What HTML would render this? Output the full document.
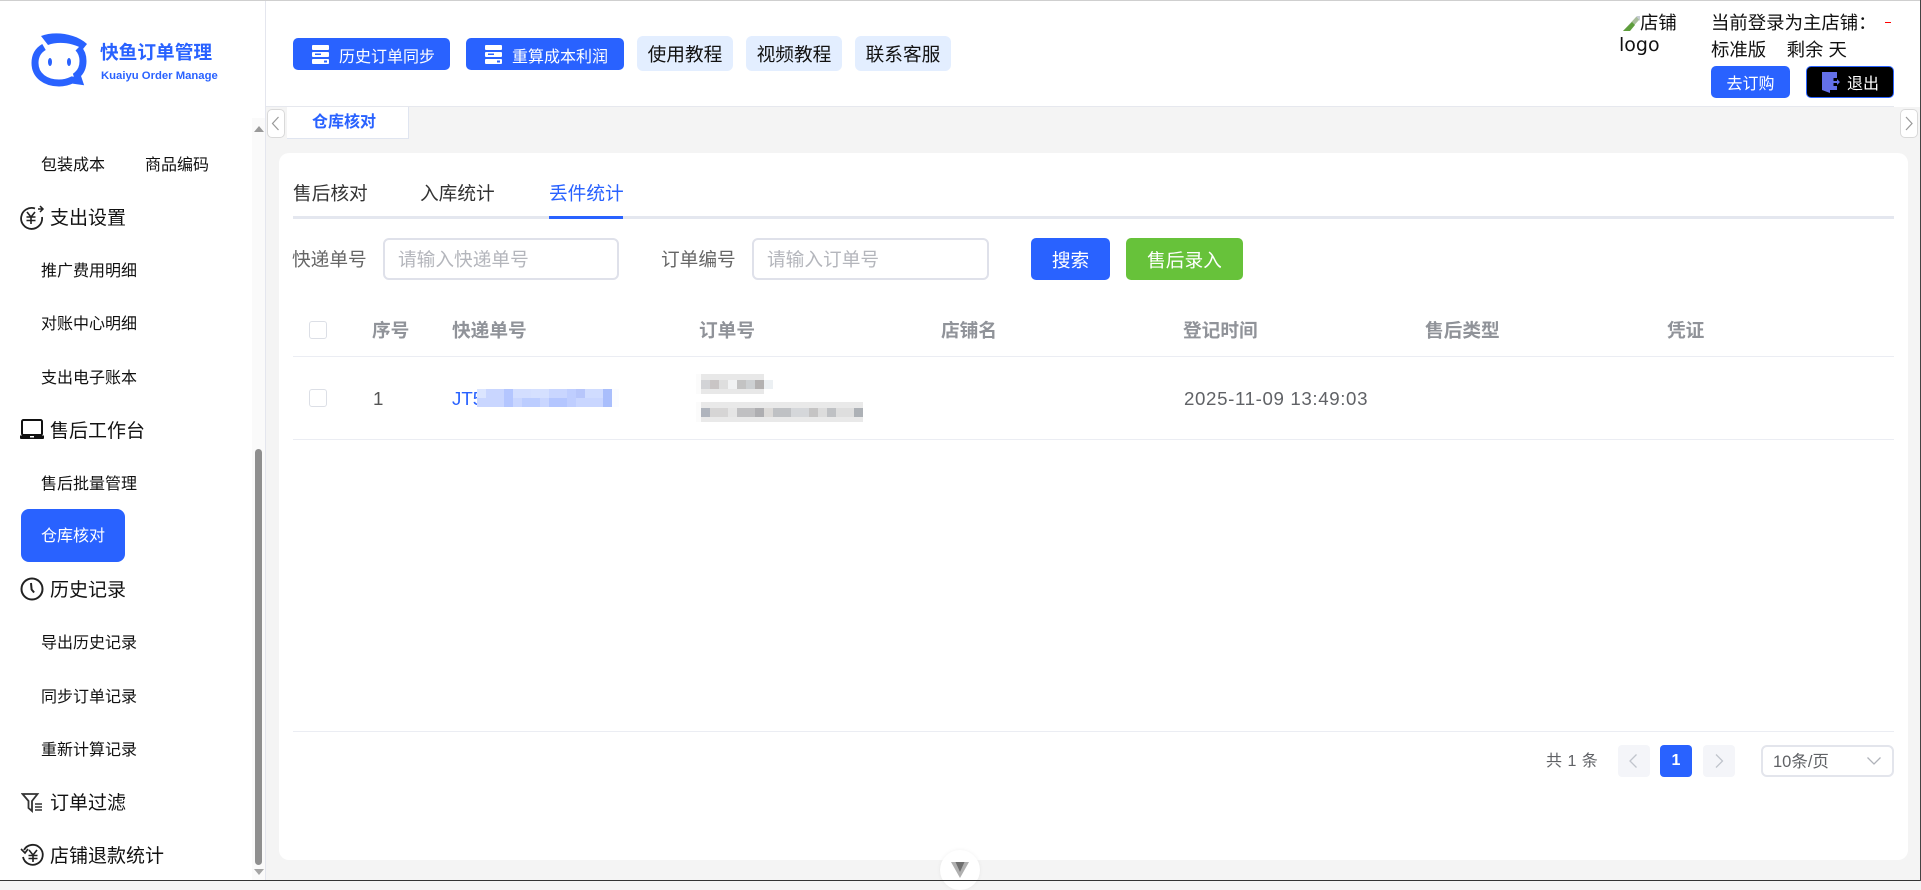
<!DOCTYPE html>
<html lang="zh"><head><meta charset="utf-8"><title>快鱼订单管理</title>
<style>
*{box-sizing:border-box;margin:0;padding:0}
html,body{width:1921px;height:881px;overflow:hidden;background:#f4f4f4;font-family:"Liberation Sans","Noto Sans CJK SC",sans-serif}
.a{position:absolute}
.t{position:absolute;white-space:nowrap;line-height:26px;height:26px}
.s{font-size:16px;color:#111}
.m{font-size:19px;color:#111}
.g{font-size:18.7px;color:#555}
.h{font-size:18.7px;color:#909399;font-weight:700}
.b{position:absolute;background:#2962ff;color:#fff;border-radius:5px;display:flex;align-items:center;justify-content:center;white-space:nowrap}
.l{position:absolute;background:#e3eeff;color:#111;border-radius:6px;font-size:18.7px;display:flex;align-items:center;justify-content:center;top:36px;height:35px;width:96px}
.inp{position:absolute;top:238px;height:42px;border:2px solid #dfe1ea;border-radius:6px;background:#fff;color:#b4b6bc;font-size:18.7px;line-height:40px;padding-left:13px}
.cb{position:absolute;left:309px;width:18px;height:18px;border:1px solid #dcdfe6;border-radius:3px;background:#fff}
.ln{position:absolute;left:293px;width:1601px;height:1px;background:#ebedf3}
.pg{position:absolute;top:745px;width:32px;height:32px;background:#f4f5f9;border-radius:4px}
</style></head><body>

<div class="a" style="left:0;top:0;width:1921px;height:107px;background:#fff"></div>
<div class="a" style="left:265px;top:106px;width:1629px;height:1px;background:#e6e8ee"></div>

<!-- Sidebar -->
<div class="a" style="left:0;top:0;width:265px;height:881px;background:#fff"></div>
<div class="a" style="left:252px;top:118px;width:13px;height:763px;background:#fafafa"></div>
<div class="a" style="left:265px;top:0;width:1px;height:881px;background:#e4e6ee"></div>
<div class="a" style="left:255px;top:449px;width:7px;height:416px;background:#8f8f8f;border-radius:4px"></div>
<svg class="a" style="left:252px;top:125px" width="14" height="8"><path d="M7 1L12 7H2z" fill="#9a9a9a"/></svg>
<svg class="a" style="left:252px;top:868px" width="14" height="8"><path d="M7 7L12 1H2z" fill="#a5a5a5"/></svg>

<!-- Logo -->
<svg class="a" style="left:29px;top:31px" width="64" height="60" viewBox="0 0 64 60">
<path d="M15 16C8 20 6 26 6 32C6 45 17 52 30 52C35 52 39 51 43 49L50 50L48 44C53 40 54 35 54 30C54 24 52 20 49 17" fill="none" stroke="#2962ff" stroke-width="7"/>
<path d="M12 5C25 0 46 2 58 13L54 18C44 12 30 10 19 14z" fill="#2962ff"/>
<ellipse cx="21" cy="31" rx="2" ry="4" fill="#2962ff"/><ellipse cx="40" cy="31" rx="2" ry="4" fill="#2962ff"/>
</svg>
<div class="t" style="left:100px;top:40px;font-size:18.7px;font-weight:700;color:#2962ff">快鱼订单管理</div>
<div class="t" style="left:101px;top:63px;font-size:11.3px;font-weight:700;color:#2962ff">Kuaiyu Order Manage</div>

<!-- Menu -->
<div class="t s" style="left:41px;top:153px">包装成本</div>
<div class="t s" style="left:145px;top:153px">商品编码</div>
<svg class="a" style="left:20px;top:204px" width="25" height="26" viewBox="0 0 25 26" fill="none" stroke="#222" stroke-width="1.8">
<path d="M15 4.500A10.500 10.500 0 1 0 22 13"/><path d="M18 5h4M20 2l3 3-3 3" stroke-width="1.5"/>
<path d="M7 8l4 5 4-5M6.500 13h9M6.500 16.500h9M11 13v7" stroke-width="1.6"/></svg>
<div class="t m" style="left:50px;top:206px">支出设置</div>
<div class="t s" style="left:41px;top:259px">推广费用明细</div>
<div class="t s" style="left:41px;top:312px">对账中心明细</div>
<div class="t s" style="left:41px;top:366px">支出电子账本</div>
<svg class="a" style="left:20px;top:418px" width="24" height="22" viewBox="0 0 24 22"><rect x="2" y="2" width="20" height="15" rx="1.500" fill="none" stroke="#111" stroke-width="2"/><path d="M0 17.500h24V20a1 1 0 0 1-1 1H1a1 1 0 0 1-1-1z" fill="#111"/><rect x="10" y="18" width="4" height="1.500" fill="#fff"/></svg>
<div class="t m" style="left:50px;top:419px">售后工作台</div>
<div class="t s" style="left:41px;top:472px">售后批量管理</div>
<div class="b" style="left:21px;top:509px;width:104px;height:53px;font-size:16px;border-radius:8px;padding-bottom:3px">仓库核对</div>
<svg class="a" style="left:20px;top:577px" width="24" height="24" viewBox="0 0 24 24" fill="none" stroke="#222" stroke-width="2"><circle cx="12" cy="12" r="10.500"/><path d="M11 6l.6 6.500 2.500 3"/></svg>
<div class="t m" style="left:50px;top:578px">历史记录</div>
<div class="t s" style="left:41px;top:631px">导出历史记录</div>
<div class="t s" style="left:41px;top:685px">同步订单记录</div>
<div class="t s" style="left:41px;top:738px">重新计算记录</div>
<svg class="a" style="left:21px;top:792px" width="22" height="21" viewBox="0 0 22 21" fill="none" stroke="#333" stroke-width="1.800"><path d="M1.500 2h15l-5.500 7v10l-3.500-3V9z"/><path d="M14 12h7M14 15h7M14 18h7" stroke-width="1.500"/></svg>
<div class="t m" style="left:50px;top:791px">订单过滤</div>
<svg class="a" style="left:20px;top:843px" width="25" height="25" viewBox="0 0 25 25" fill="none" stroke="#222" stroke-width="1.800"><path d="M4 7A10 10 0 1 1 3 14"/><path d="M1 6l4 4 3-4" stroke-width="1.600"/><path d="M9 7l4 5 4-5M8.500 12.500h9M8.500 15.500h9M13 12.500v6.500" stroke-width="1.600"/></svg>
<div class="t m" style="left:50px;top:844px">店铺退款统计</div>

<!-- Header buttons -->
<div class="b" style="left:293px;top:38px;width:157px;height:32px;font-size:16px;justify-content:flex-start;padding-left:46px;padding-top:1px">历史订单同步</div>
<svg class="a" style="left:312px;top:45px" width="17" height="19" viewBox="0 0 17 19"><rect width="17" height="5" rx="1" fill="#fff"/><rect y="7" width="17" height="5" rx="1" fill="#fff"/><rect y="14" width="17" height="5" rx="1" fill="#fff"/><rect x="3" y="8.500" width="6" height="1.500" fill="#2962ff"/><rect x="12" y="15.500" width="3" height="2" fill="#2962ff"/></svg>
<div class="b" style="left:466px;top:38px;width:158px;height:32px;font-size:16px;justify-content:flex-start;padding-left:46px;padding-top:1px">重算成本利润</div>
<svg class="a" style="left:485px;top:45px" width="17" height="19" viewBox="0 0 17 19"><rect width="17" height="5" rx="1" fill="#fff"/><rect y="7" width="17" height="5" rx="1" fill="#fff"/><rect y="14" width="17" height="5" rx="1" fill="#fff"/><rect x="3" y="8.500" width="6" height="1.500" fill="#2962ff"/><rect x="12" y="15.500" width="3" height="2" fill="#2962ff"/></svg>
<div class="l" style="left:637px">使用教程</div>
<div class="l" style="left:746px">视频教程</div>
<div class="l" style="left:855px">联系客服</div>

<!-- Top right -->
<svg class="a" style="left:1623px;top:14px" width="17" height="17" viewBox="0 0 17 17"><path d="M0 17L13 3h3v3L6 17z" fill="#a9bd9c"/><path d="M0 17L9 8l3 3-5 6z" fill="#5e9e3c"/><path d="M13 2h4v5z" fill="#c7cdd4"/></svg>
<div class="t" style="left:1640px;top:10px;font-size:18.4px;color:#111">店铺</div>
<div class="t" style="left:1619px;top:32px;font-size:19px;color:#111;font-family:'DejaVu Sans',sans-serif">logo</div>
<div class="t" style="left:1711px;top:10px;font-size:18.4px;color:#111">当前登录为主店铺：</div>
<div class="a" style="left:1885px;top:22px;width:6px;height:1px;background:#f00"></div>
<div class="t" style="left:1711px;top:37px;font-size:18.4px;color:#111;white-space:pre">标准版    剩余 天</div>
<div class="b" style="left:1711px;top:66px;width:79px;height:32px;font-size:16px">去订购</div>
<div class="b" style="left:1806px;top:66px;width:88px;height:32px;background:#000;border:1px solid #2962ff;font-size:16px;justify-content:flex-start;padding-left:40px">退出</div>
<svg class="a" style="left:1821px;top:71px" width="20" height="22" viewBox="0 0 20 22"><path d="M1 1h15v6h-3.500v8H16v4H9v3L1 19z" fill="#6470e8"/><path d="M11 10h5V8l3 3-3 3v-2h-5z" fill="#6470e8"/></svg>

<!-- Tab strip -->
<div class="a" style="left:287px;top:107px;width:122px;height:32px;background:#fff;border-right:1px solid #e0e5f0;border-bottom:1px solid #e0e5f0"></div>
<div class="t" style="left:312px;top:110px;font-size:16px;font-weight:700;color:#2962ff">仓库核对</div>
<div class="a" style="left:267px;top:109px;width:18px;height:29px;background:#fff;border:1px solid #d9d9d9;border-radius:5px"></div>
<svg class="a" style="left:271px;top:116px" width="10" height="15" fill="none" stroke="#999" stroke-width="1.200"><path d="M7.500 1L1.500 7.500 7.500 14"/></svg>
<div class="a" style="left:1900px;top:109px;width:18px;height:29px;background:#fff;border:1px solid #d9d9d9;border-radius:5px"></div>
<svg class="a" style="left:1904px;top:116px" width="10" height="15" fill="none" stroke="#999" stroke-width="1.200"><path d="M2 1l6 6.500L2 14"/></svg>

<!-- Card -->
<div class="a" style="left:279px;top:153px;width:1629px;height:707px;background:#fff;border-radius:10px"></div>
<div class="t g" style="left:293px;top:181px;color:#333">售后核对</div>
<div class="t g" style="left:420px;top:181px;color:#333">入库统计</div>
<div class="t g" style="left:549px;top:181px;color:#2962ff">丢件统计</div>
<div class="a" style="left:293px;top:216px;width:1601px;height:3px;background:#e4e7ef"></div>
<div class="a" style="left:549px;top:216px;width:74px;height:3px;background:#2962ff"></div>

<div class="t g" style="left:292px;top:247px;color:#666">快递单号</div>
<div class="inp" style="left:383px;width:236px">请输入快递单号</div>
<div class="t g" style="left:661px;top:247px;color:#666">订单编号</div>
<div class="inp" style="left:752px;width:237px">请输入订单号</div>
<div class="b" style="left:1031px;top:238px;width:79px;height:42px;font-size:18.7px;padding-top:1px">搜索</div>
<div class="b" style="left:1126px;top:238px;width:117px;height:42px;font-size:18.7px;background:#67c23a;padding-top:1px">售后录入</div>

<!-- Table -->
<div class="cb" style="top:321px"></div>
<div class="t h" style="left:372px;top:318px">序号</div>
<div class="t h" style="left:452px;top:318px">快递单号</div>
<div class="t h" style="left:699px;top:318px">订单号</div>
<div class="t h" style="left:941px;top:318px">店铺名</div>
<div class="t h" style="left:1183px;top:318px">登记时间</div>
<div class="t h" style="left:1425px;top:318px">售后类型</div>
<div class="t h" style="left:1667px;top:318px">凭证</div>
<div class="ln" style="top:356px"></div>
<div class="cb" style="top:389px"></div>
<div class="t g" style="left:373px;top:386px">1</div>
<div class="t g" style="left:452px;top:386px;color:#2962ff">JT5</div>
<svg class="a" style="left:477px;top:389px" width="142" height="18" shape-rendering="crispEdges">
<rect width="135" height="18" fill="#c9d6ff"/>
<rect x="0" width="9" height="9" fill="#dbe5ff"/><rect x="27" width="9" height="18" fill="#b4c6ff"/><rect x="36" width="18" height="9" fill="#d3deff"/><rect x="45" y="9" width="18" height="9" fill="#bccdff"/><rect x="54" width="18" height="9" fill="#d5e0ff"/><rect x="72" y="9" width="18" height="9" fill="#b4c6ff"/><rect x="90" width="9" height="18" fill="#bfceff"/><rect x="99" width="9" height="9" fill="#b7c6fb"/><rect x="108" width="18" height="9" fill="#d0dcff"/><rect x="126" width="9" height="18" fill="#a9befc"/><rect x="135" width="7" height="18" fill="#fbfcff"/>
</svg>
<svg class="a" style="left:693px;top:374px" width="172" height="48" shape-rendering="crispEdges">
<rect x="3" width="68" height="20" fill="#fbfbfb"/>
<rect x="8" width="63" height="20" fill="#e8e8e8"/>
<rect x="8" y="6" width="9" height="9" fill="#d2d3d6"/><rect x="17" y="6" width="9" height="9" fill="#c9c5c5"/><rect x="26" y="6" width="9" height="9" fill="#dedede"/><rect x="35" y="6" width="9" height="9" fill="#f1f2f3"/><rect x="44" y="6" width="9" height="9" fill="#c3c3c3"/><rect x="53" y="6" width="9" height="9" fill="#cdd0d2"/><rect x="62" y="6" width="9" height="9" fill="#b3b1b1"/><rect x="71" y="6" width="9" height="9" fill="#ecf0f3"/>
<rect x="3" y="28" width="167" height="20" fill="#fbfbfb"/>
<rect x="8" y="28" width="162" height="20" fill="#e9e9e9"/>
<rect x="8" y="34" width="9" height="9" fill="#afb4bd"/><rect x="17" y="34" width="18" height="9" fill="#d6d5d5"/><rect x="35" y="34" width="9" height="9" fill="#e5e5e5"/><rect x="44" y="34" width="18" height="9" fill="#c0c0c2"/><rect x="62" y="34" width="9" height="9" fill="#aeaeb1"/><rect x="71" y="34" width="9" height="9" fill="#dcdad8"/><rect x="80" y="34" width="18" height="9" fill="#bfc1c4"/><rect x="98" y="34" width="18" height="9" fill="#d5d7da"/><rect x="116" y="34" width="9" height="9" fill="#c5c4c4"/><rect x="125" y="34" width="9" height="9" fill="#dcdcdc"/><rect x="134" y="34" width="9" height="9" fill="#bfc1c4"/><rect x="143" y="34" width="18" height="9" fill="#dedede"/><rect x="161" y="34" width="9" height="9" fill="#adb1b6"/>
</svg>
<div class="t g" style="left:1184px;top:386px;color:#606266;letter-spacing:.63px">2025-11-09 13:49:03</div>
<div class="ln" style="top:439px"></div>

<!-- Pagination -->
<div class="ln" style="top:731px"></div>
<div class="t" style="left:1546px;top:749px;font-size:16px;color:#606266;word-spacing:1px">共 1 条</div>
<div class="pg" style="left:1618px"></div>
<svg class="a" style="left:1628px;top:753px" width="12" height="16" fill="none" stroke="#c0c4cc" stroke-width="1.300"><path d="M8.500 1.500L2 8l6.500 6.500"/></svg>
<div class="b" style="left:1660px;top:745px;width:32px;height:32px;font-size:16px;font-weight:700;border-radius:4px">1</div>
<div class="pg" style="left:1703px"></div>
<svg class="a" style="left:1713px;top:753px" width="12" height="16" fill="none" stroke="#c0c4cc" stroke-width="1.300"><path d="M3 1.500L9.500 8 3 14.500"/></svg>
<div class="a" style="left:1761px;top:745px;width:133px;height:32px;border:2px solid #e3e5ec;border-radius:6px;background:#fff"></div>
<div class="t" style="left:1773px;top:749px;font-size:16.5px;color:#606266">10条/页</div>
<svg class="a" style="left:1866px;top:755px" width="16" height="12" fill="none" stroke="#b0b3ba" stroke-width="1.300"><path d="M1.500 2.500L8 9l6.500-6.500"/></svg>

<!-- Bottom handle -->
<div class="a" style="left:940px;top:850px;width:40px;height:40px;border-radius:50%;background:#fff;box-shadow:0 0 4px rgba(0,0,0,.06)"></div>
<svg class="a" style="left:951px;top:861px" width="18" height="17"><path d="M0 1h18L9 17z" fill="#b0b0b0"/><path d="M4.500 1h9L9 11z" fill="#6f6f6f"/></svg>

<!-- Window edges -->
<div class="a" style="left:0;top:0;width:1921px;height:1px;background:#cfcfcf"></div>
<div class="a" style="left:0;top:880px;width:1921px;height:1px;background:#333"></div>
<div class="a" style="left:1920px;top:0;width:1px;height:881px;background:#444"></div>
</body></html>
